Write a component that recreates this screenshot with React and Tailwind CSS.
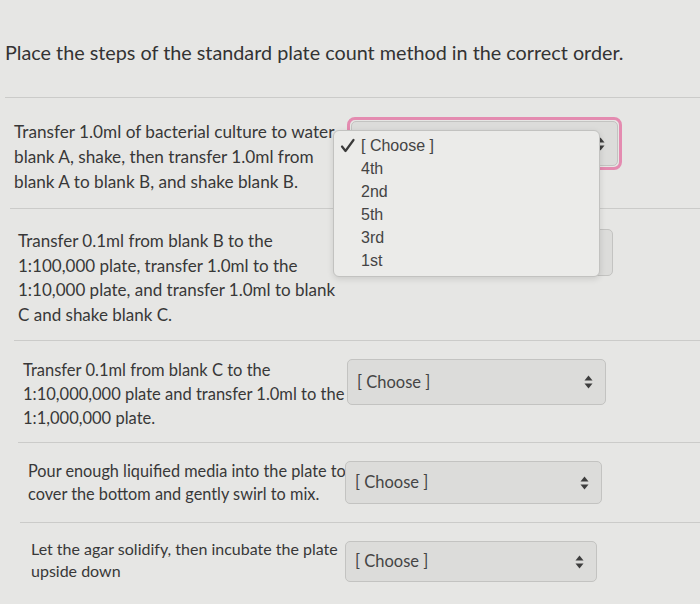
import React from 'react'

const steps = [
  {
    lines: [
      'Transfer 1.0ml of bacterial culture to water',
      'blank A, shake, then transfer 1.0ml from',
      'blank A to blank B, and shake blank B.',
    ],
    row: 'h-[110px] ml-[8px] pl-[6px]',
    text: 'mt-[21px] w-[333px] text-[17.2px] leading-[25px]',
    select: 'mt-[19px] w-[275px] h-[53px]',
    focused: true,
    hidden: true,
  },
  {
    lines: [
      'Transfer 0.1ml from blank B to the',
      '1:100,000 plate, transfer 1.0ml to the',
      '1:10,000 plate, and transfer 1.0ml to blank',
      'C and shake blank C.',
    ],
    row: 'h-[132px] ml-[10px] pl-[8px]',
    text: 'mt-[20px] w-[329px] text-[17px] leading-[24.5px]',
    select: 'mt-[20px] w-[266px] h-[47px]',
    hidden: true,
  },
  {
    lines: [
      'Transfer 0.1ml from blank C to the',
      '1:10,000,000 plate and transfer 1.0ml to the',
      '1:1,000,000 plate.',
    ],
    row: 'h-[102px] ml-[14px] pl-[9px]',
    text: 'mt-[17px] w-[324px] text-[16.5px] leading-[24px]',
    select: 'mt-[18px] w-[259px] h-[46px]',
  },
  {
    lines: [
      'Pour enough liquified media into the plate to',
      'cover the bottom and gently swirl to mix.',
    ],
    row: 'h-[80px] ml-[18px] pl-[10px]',
    text: 'mt-[16px] w-[317px] text-[16.3px] leading-[23px]',
    select: 'mt-[18px] w-[257px] h-[43px]',
  },
  {
    lines: ['Let the agar solidify, then incubate the plate', 'upside down'],
    row: 'h-[83px] ml-[20px] pl-[11px]',
    text: 'mt-[15px] w-[314px] text-[16px] leading-[22px]',
    select: 'mt-[18px] w-[252px] h-[41px]',
  },
]

const options = ['4th', '2nd', '5th', '3rd', '1st']

function Arrows() {
  return (
    <svg width="9" height="14" viewBox="0 0 9 14" className="shrink-0">
      <path d="M4.5 0.5 L8.5 5.5 L0.5 5.5 Z" fill="#3d3d3d" />
      <path d="M4.5 13.5 L8.5 8.5 L0.5 8.5 Z" fill="#3d3d3d" />
    </svg>
  )
}

function ChooseBox({ className, focused, hidden }) {
  const inner = (
    <div className="flex h-full w-full items-center justify-between rounded-[5px] border border-[#c3c3c1] bg-[#dcdcda] pl-[9px] pr-[12px] text-[16.5px] text-[#454545]">
      <span>{hidden ? '' : '[ Choose ]'}</span>
      <Arrows />
    </div>
  )
  if (focused) {
    return (
      <div className={`${className} shrink-0 rounded-[8px] border-[3px] border-[#e48bb0] p-[1px]`}>
        {inner}
      </div>
    )
  }
  return <div className={`${className} shrink-0`}>{inner}</div>
}

export default function App() {
  return (
    <div
      className="relative h-[604px] w-[700px] overflow-hidden bg-[#e6e6e4] text-[#383838]"
      style={{ fontFamily: 'Lato, "Open Sans", sans-serif' }}
    >
      <h1 className="pl-[5px] pt-[38px] text-[19.8px] leading-[28px] font-normal text-[#333]">
        Place the steps of the standard plate count method in the correct order.
      </h1>

      <div className="mt-[31px] ml-[5px] border-t border-[#cbcbc9]" />

      {steps.map((s, i) => (
        <div
          key={i}
          className={`flex items-start ${s.row} ${i > 0 ? 'border-t border-[#cbcbc9]' : ''}`}
        >
          <div className={`${s.text} shrink-0 whitespace-nowrap`}>
            {s.lines.map((l, j) => (
              <div key={j}>{l}</div>
            ))}
          </div>
          <ChooseBox className={s.select} focused={s.focused} hidden={s.hidden} />
        </div>
      ))}

      {/* open option list of the first select */}
      <div
        className="absolute left-[333px] top-[130px] h-[147px] w-[267px] rounded-[6px] border border-[#c2c2c0] bg-[#ebebe9] pt-[3px] text-[16px] leading-[23px] text-[#444] shadow-[0_2px_6px_rgba(0,0,0,0.12)]"
        style={{ fontFamily: '"Liberation Sans", Arial, sans-serif' }}
      >
        <div className="flex items-center">
          <svg width="27" height="23" viewBox="0 0 27 23" className="shrink-0">
            <path d="M8 12.5 L11.5 17 L19.5 6" fill="none" stroke="#3a3a3a" strokeWidth="2.2" strokeLinecap="round" strokeLinejoin="round" />
          </svg>
          <span>[ Choose ]</span>
        </div>
        {options.map((o) => (
          <div key={o} className="pl-[27px]">
            {o}
          </div>
        ))}
      </div>
    </div>
  )
}
